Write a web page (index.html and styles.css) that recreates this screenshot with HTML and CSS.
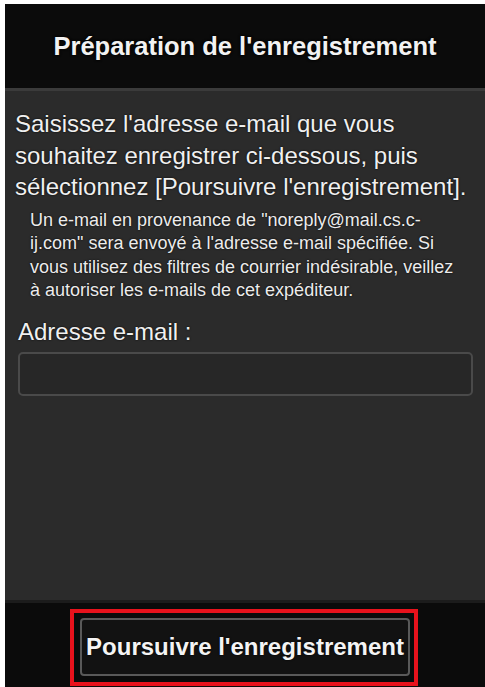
FILE: index.html
```html
<!DOCTYPE html>
<html lang="fr">
<head>
<meta charset="utf-8">
<title>Préparation de l'enregistrement</title>
<link rel="stylesheet" href="styles.css">
</head>
<body>
<div class="screen">
  <header class="topbar">
    <h1 class="title">Préparation de l'enregistrement</h1>
  </header>
  <main class="content">
    <p class="lead">Saisissez l'adresse e-mail que vous souhaitez enregistrer ci-dessous, puis sélectionnez [Poursuivre l'enregistrement].</p>
    <p class="note">Un e-mail en provenance de "noreply@mail.cs.c-<br>ij.com" sera envoyé à l'adresse e-mail spécifiée. Si<br>vous utilisez des filtres de courrier indésirable, veillez<br>à autoriser les e-mails de cet expéditeur.</p>
    <label class="label" for="email">Adresse e-mail :</label>
    <input class="field" id="email" type="email">
  </main>
  <footer class="bottombar">
    <div class="highlight">
      <button class="btn" type="button">Poursuivre l'enregistrement</button>
    </div>
  </footer>
</div>
</body>
</html>
```
FILE: styles.css
```css
html, body {
  margin: 0;
  padding: 0;
  background: #ffffff;
}
body {
  font-family: "Liberation Sans", Arial, sans-serif;
}
.screen {
  margin: 4px 0 0 5px;
  width: 480px;
  height: 683px;
  display: flex;
  flex-direction: column;
  background: #0b0b0b;
  color: #f4f4f4;
  overflow: hidden;
}
.topbar {
  height: 84px;
  flex: none;
  display: flex;
  align-items: center;
  justify-content: center;
  background: #0b0b0b;
}
.title {
  margin: 0;
  font-size: 25.5px;
  font-weight: bold;
  color: #f2f2f2;
  text-shadow: 0 0 2px #000, 0 0 3px #000;
}
.content {
  height: 515px;
  flex: none;
  box-sizing: border-box;
  padding: 17px 12px 0 13px;
  background: #2b2b2b;
  border-top: 3px solid #3b3b3b;
  border-bottom: 3px solid #1c1c1c;
  display: flex;
  flex-direction: column;
}
.lead {
  margin: 0 0 0 -3px;
  font-size: 24px;
  line-height: 31.5px;
  text-shadow: 0 0 2px #000;
  color: #f0f0f0;
}
.note {
  margin: 6px 0 0 12px;
  font-size: 18px;
  line-height: 23.5px;
  color: #ececec;
  text-shadow: 0 0 2px #000;
}
.label {
  margin-top: 15px;
  font-size: 24px;
  line-height: 28px;
  color: #f0f0f0;
  text-shadow: 0 0 2px #000;
}
.field {
  margin: 6px 0 0 0;
  height: 44px;
  box-sizing: border-box;
  width: 100%;
  background: #272727;
  border: 2px solid #4a4a4a;
  border-radius: 5px;
  outline: none;
}
.bottombar {
  flex: 1;
  display: flex;
  justify-content: center;
  align-items: flex-start;
  padding-top: 6px;
  background: #0b0b0b;
}
.highlight {
  border: 4px solid #e8121c;
  padding: 5px 4px 6px 6px;
  margin-left: -2px;
}
.btn {
  display: block;
  height: 58px;
  padding: 0 4px;
  background: #121212;
  border: 2px solid #595959;
  border-radius: 4px;
  color: #f4f4f4;
  font-family: "Liberation Sans", Arial, sans-serif;
  font-size: 24px;
  font-weight: bold;
  text-shadow: 0 0 2px #000;
}
```
